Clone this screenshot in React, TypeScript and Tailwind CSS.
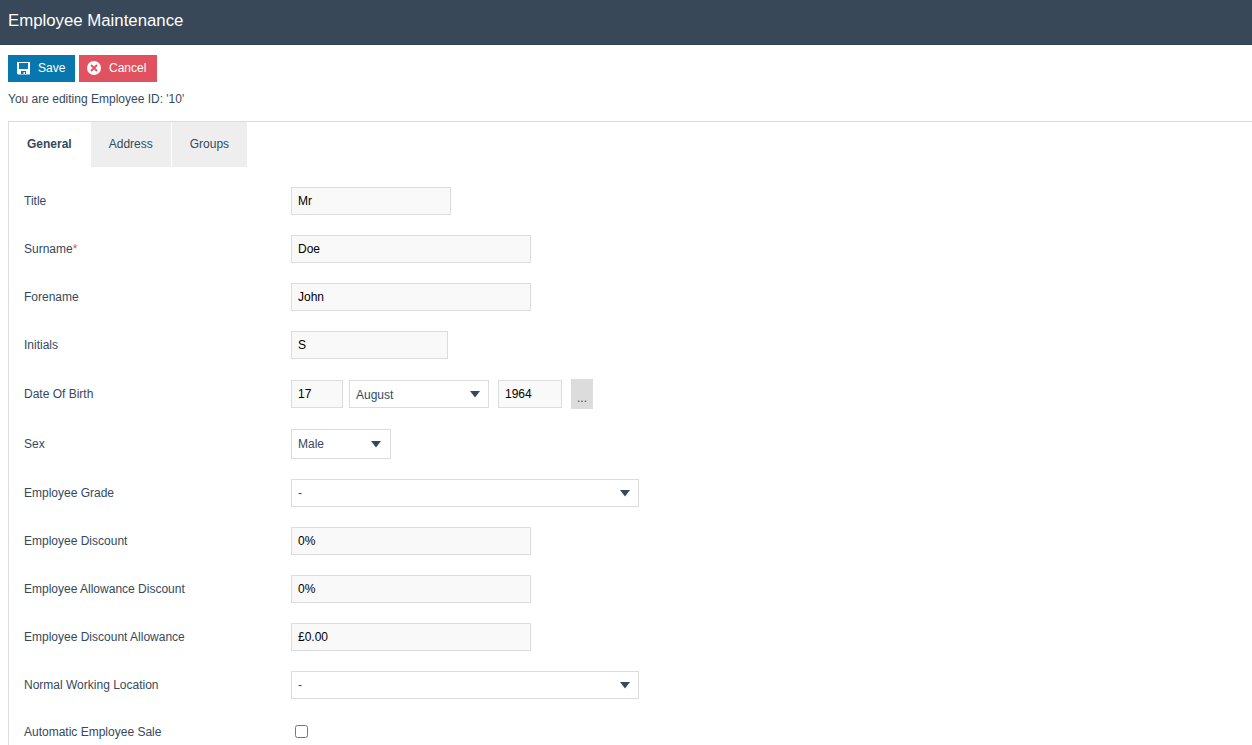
import type { ReactNode } from "react";
import clsx from "clsx";

type RowProps = {
  label: string;
  required?: boolean;
  children: ReactNode;
};

type FieldProps = {
  value: string;
  className: string;
};

const tabs = ["General", "Address", "Groups"];

const Row = ({ label, required, children }: RowProps) => (
  <div className="flex items-center py-2.5">
    <label className="w-[267px] shrink-0">
      {label}
      {required && <span className="text-[#e05260]">*</span>}
    </label>
    {children}
  </div>
);

const TextField = ({ value, className }: FieldProps) => (
  <input
    type="text"
    defaultValue={value}
    className={clsx("h-7 border border-[#dcdcdc] bg-[#f9f9f9] px-1.5 text-black outline-none", className)}
  />
);

const SelectField = ({ value, className }: FieldProps) => (
  <div className={clsx("relative", className)}>
    <select
      defaultValue={value}
      className="h-full w-full appearance-none border border-[#dcdcdc] bg-white pl-1.5 outline-none"
    >
      <option>{value}</option>
    </select>
    <svg
      className="pointer-events-none absolute top-1/2 right-[9px] -mt-[3px]"
      width="10"
      height="7"
      viewBox="0 0 10 7"
    >
      <path d="M0 0h10L5 6.5z" fill="#34495e" />
    </svg>
  </div>
);

const SaveIcon = () => (
  <svg width="13" height="13" viewBox="0 0 13 13">
    <path
      fill="#fff"
      fillRule="evenodd"
      d="M0 0h13v12.5H1L0 11.5zM2 1v6h9V1zM4 9v3h5V9zM6.5 10H8v2H6.5z"
    />
  </svg>
);

const CancelIcon = () => (
  <svg width="14" height="14" viewBox="0 0 14 14">
    <circle cx="7" cy="7" r="7" fill="#fff" />
    <path d="M4 4l6 6M10 4l-6 6" stroke="#e05260" strokeWidth="1.8" />
  </svg>
);

const App = () => {
  return (
    <div className="h-[745px] overflow-hidden bg-white font-['Liberation_Sans',Arial,sans-serif] text-xs text-[#34495e]">
      <header className="flex h-[45px] items-center border-b border-[#2f4050] bg-[#384858] px-2 pb-[3px]">
        <h1 className="text-[16.8px] leading-6 text-white">Employee Maintenance</h1>
      </header>

      <div className="flex gap-1 px-2 pt-2.5 text-white">
        <button className="flex h-[27px] w-[67px] items-center bg-[#0877ae] pl-[9px]">
          <SaveIcon />
          <span className="ml-2 pb-0.5">Save</span>
        </button>
        <button className="flex h-[27px] w-[78px] items-center bg-[#e05260] pb-px pl-2">
          <CancelIcon />
          <span className="ml-2 pb-px">Cancel</span>
        </button>
      </div>
      <p className="px-2 pt-[9px]">You are editing Employee ID: '10'</p>

      <main className="mt-3.5 ml-2 border-t border-l border-[#dcdcdc]">
        <nav className="flex h-[45px] gap-px">
          {tabs.map((tab, index) => (
            <button
              key={tab}
              className={clsx("px-[18px] pb-0.5", index === 0 ? "font-bold" : "bg-[#eeeeee]")}
            >
              {tab}
            </button>
          ))}
        </nav>

        <form className="pt-2.5 pl-[15px]">
          <Row label="Title">
            <TextField value="Mr" className="w-40" />
          </Row>
          <Row label="Surname" required>
            <TextField value="Doe" className="w-60" />
          </Row>
          <Row label="Forename">
            <TextField value="John" className="w-60" />
          </Row>
          <Row label="Initials">
            <TextField value="S" className="w-[157px]" />
          </Row>
          <Row label="Date Of Birth">
            <TextField value="17" className="w-[52px]" />
            <SelectField value="August" className="ml-1.5 h-7 w-[140px] [&>select]:pt-0.5" />
            <TextField value="1964" className="ml-[9px] w-16" />
            <button type="button" className="ml-[9px] h-[30px] w-[22px] bg-[#dcdcdc] pt-2">
              ...
            </button>
          </Row>
          <Row label="Sex">
            <SelectField value="Male" className="h-[30px] w-[100px] [&>svg]:right-2.5" />
          </Row>
          <Row label="Employee Grade">
            <SelectField value="-" className="h-7 w-[348px]" />
          </Row>
          <Row label="Employee Discount">
            <TextField value="0%" className="w-60" />
          </Row>
          <Row label="Employee Allowance Discount">
            <TextField value="0%" className="w-60" />
          </Row>
          <Row label="Employee Discount Allowance">
            <TextField value="£0.00" className="w-60" />
          </Row>
          <Row label="Normal Working Location">
            <SelectField value="-" className="h-7 w-[348px]" />
          </Row>
          <Row label="Automatic Employee Sale">
            <input type="checkbox" className="mt-1.5 mb-[7px] ml-1 size-[13px]" />
          </Row>
        </form>
      </main>
    </div>
  );
};

export default App;
